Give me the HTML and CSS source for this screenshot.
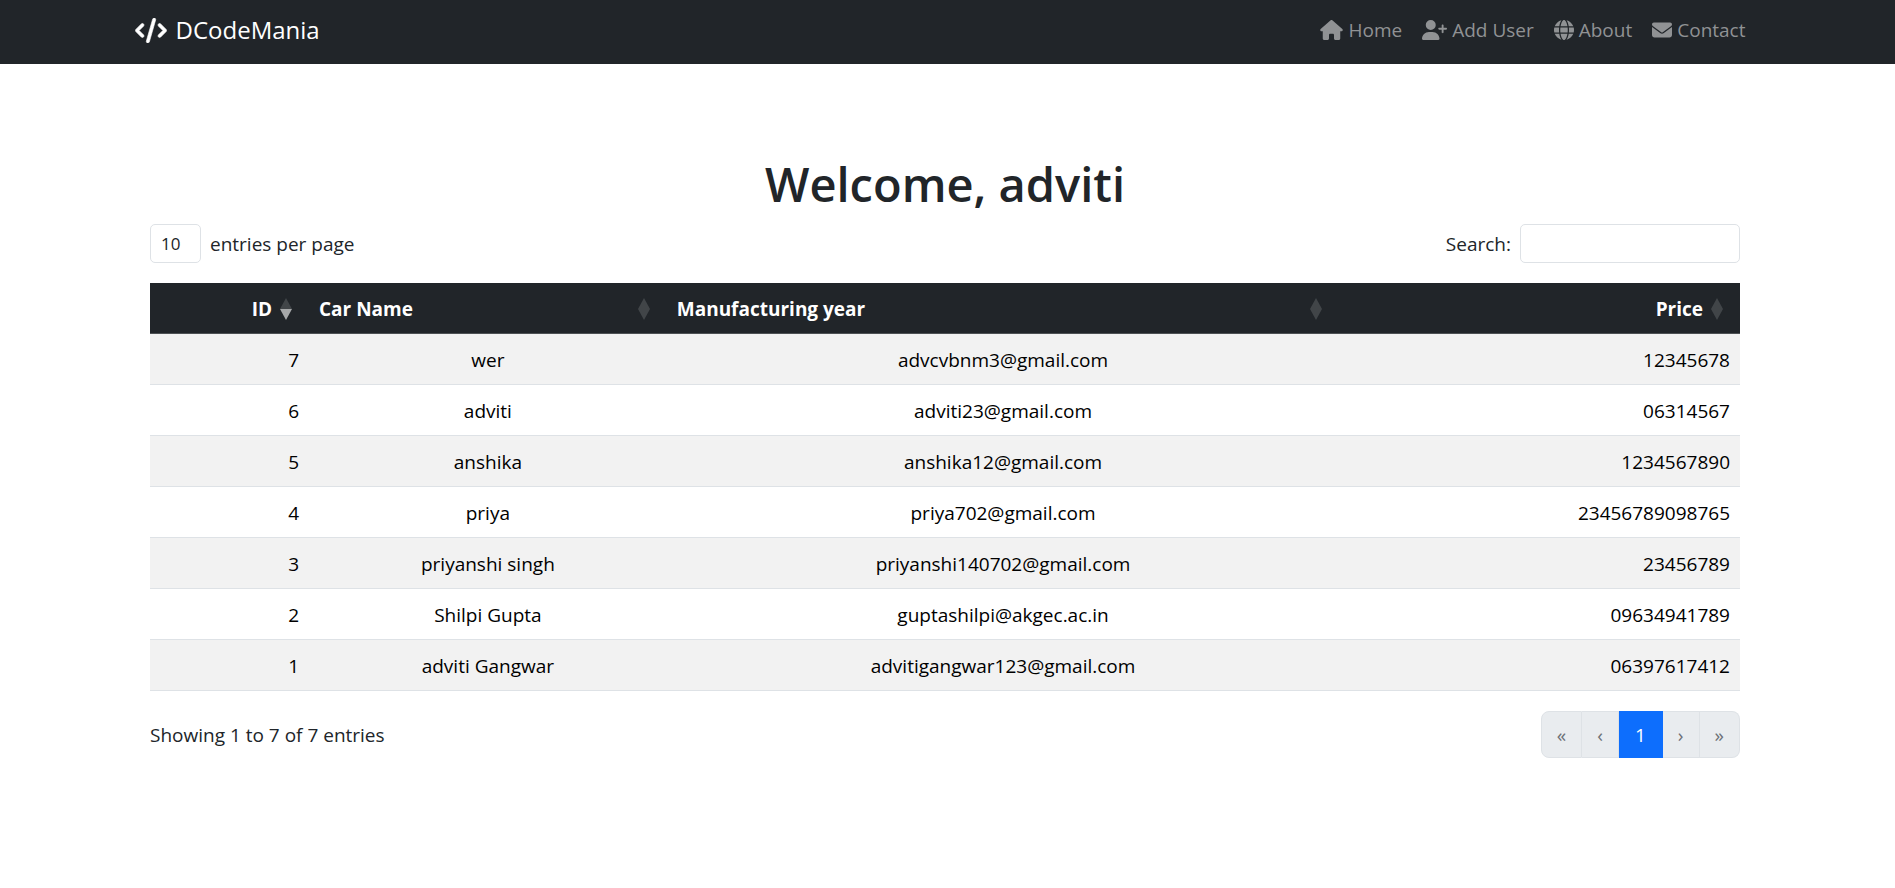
FILE: index.html
```html
<!DOCTYPE html>
<html lang="en">
<head>
<meta charset="utf-8">
<meta name="viewport" content="width=device-width, initial-scale=1">
<title>DCodeMania</title>
<link rel="stylesheet" href="styles.css">
</head>
<body>
<header class="navbar">
  <div class="container navbar-inner">
    <a class="brand" href="#">
      <svg class="icon brand-icon" viewBox="0 0 640 512" aria-hidden="true"><path d="M392.800 1.200c-17-4.900-34.700 5-39.600 22l-128 448c-4.900 17 5 34.700 22 39.600s34.700-5 39.600-22l128-448c4.900-17-5-34.700-22-39.600zm80.600 120.100c-12.500 12.500-12.500 32.800 0 45.300L562.700 256l-89.400 89.400c-12.500 12.500-12.500 32.800 0 45.300s32.800 12.500 45.300 0l112-112c12.500-12.500 12.500-32.800 0-45.300l-112-112c-12.500-12.500-32.800-12.500-45.300 0zm-306.700 0c-12.500-12.500-32.800-12.500-45.300 0l-112 112c-12.500 12.500-12.500 32.800 0 45.300l112 112c12.500 12.500 32.800 12.500 45.300 0s12.500-32.800 0-45.300L77.300 256l89.400-89.400c12.500-12.500 12.500-32.800 0-45.300z"/></svg>
      <span>DCodeMania</span>
    </a>
    <nav class="nav">
      <a class="nav-link" href="#"><svg class="icon icon-wide" viewBox="0 0 576 512" aria-hidden="true"><path d="M575.800 255.500c0 18-15 32.100-32 32.100h-32l.7 160.200c0 2.700-.2 5.400-.5 8.100V472c0 22.100-17.900 40-40 40H456c-1.100 0-2.200 0-3.300-.1c-1.400 .1-2.800 .1-4.200 .1H416 392c-22.100 0-40-17.900-40-40V448 384c0-17.700-14.300-32-32-32H256c-17.700 0-32 14.300-32 32v64 24c0 22.100-17.900 40-40 40H160 128.100c-1.500 0-3-.1-4.500-.2c-1.200 .1-2.400 .2-3.600 .2H104c-22.100 0-40-17.900-40-40V360c0-.9 0-1.900 .1-2.800V287.600H32c-18 0-32-14-32-32.100c0-9 3-17 10-24L266.400 8c7-7 15-8 22-8s15 2 21 7L564.800 231.500c8 7 12 15 11 24z"/></svg><span>Home</span></a>
      <a class="nav-link" href="#"><svg class="icon icon-widest" viewBox="0 0 640 512" aria-hidden="true"><path d="M96 128a128 128 0 1 1 256 0A128 128 0 1 1 96 128zM0 482.300C0 383.800 79.800 304 178.300 304h91.400C368.200 304 448 383.800 448 482.300c0 16.400-13.300 29.700-29.700 29.700H29.700C13.300 512 0 498.700 0 482.300zM504 312V248H440c-13.300 0-24-10.700-24-24s10.700-24 24-24h64V136c0-13.300 10.700-24 24-24s24 10.700 24 24v64h64c13.300 0 24 10.700 24 24s-10.700 24-24 24H552v64c0 13.300-10.700 24-24 24s-24-10.700-24-24z"/></svg><span>Add User</span></a>
      <a class="nav-link" href="#"><svg class="icon" viewBox="0 0 512 512" aria-hidden="true"><path d="M352 256c0 22.200-1.200 43.600-3.300 64H163.300c-2.200-20.400-3.300-41.800-3.300-64s1.200-43.600 3.300-64H348.700c2.200 20.400 3.300 41.800 3.300 64zm28.800-64H503.900c5.300 20.500 8.100 41.900 8.100 64s-2.800 43.500-8.100 64H380.800c2.100-20.600 3.200-42 3.200-64s-1.100-43.400-3.200-64zm112.600-32H376.700c-10-63.900-29.800-117.400-55.300-151.600c78.300 20.700 142 77.500 171.900 151.600zm-149.100 0H167.700c6.100-36.400 15.500-68.600 27-94.700c10.500-23.600 22.200-40.700 33.500-51.500C239.400 3.200 248.700 0 256 0s16.600 3.200 27.800 13.800c11.300 10.800 23 27.900 33.500 51.500c11.600 26 20.900 58.200 27 94.700zm-209 0H18.600C48.600 85.900 112.200 29.100 190.600 8.400C165.100 42.600 145.300 96.100 135.300 160zM8.100 192H131.200c-2.100 20.600-3.200 42-3.200 64s1.100 43.400 3.200 64H8.100C2.800 299.500 0 278.100 0 256s2.800-43.500 8.100-64zM194.700 446.600c-11.600-26-20.900-58.200-27-94.600H344.300c-6.100 36.400-15.500 68.600-27 94.600c-10.500 23.600-22.200 40.700-33.500 51.500C272.600 508.800 263.300 512 256 512s-16.600-3.200-27.800-13.800c-11.300-10.800-23-27.900-33.500-51.500zM135.300 352c10 63.900 29.800 117.400 55.300 151.600C112.200 482.900 48.600 426.100 18.600 352H135.300zm358.100 0c-30 74.100-93.600 130.900-171.900 151.600c25.500-34.200 45.200-87.700 55.300-151.600H493.400z"/></svg><span>About</span></a>
      <a class="nav-link" href="#"><svg class="icon" viewBox="0 0 512 512" aria-hidden="true"><path d="M48 64C21.500 64 0 85.500 0 112c0 15.100 7.100 29.300 19.200 38.400L236.800 313.600c11.400 8.500 27 8.500 38.400 0L492.800 150.400c12.100-9.100 19.200-23.300 19.200-38.400c0-26.500-21.500-48-48-48H48zM0 176V384c0 35.300 28.700 64 64 64H448c35.300 0 64-28.700 64-64V176L294.400 339.200c-22.800 17.100-54 17.100-76.800 0L0 176z"/></svg><span>Contact</span></a>
    </nav>
  </div>
</header>

<main class="container content">
  <h1 class="title">Welcome, adviti</h1>

  <div class="toolbar">
    <div class="field">
      <select class="control length" id="length"><option>10</option><option>25</option><option>50</option><option>100</option></select>
      <label for="length">entries per page</label>
    </div>
    <div class="field">
      <label for="search">Search:</label>
      <input class="control search" id="search" type="search">
    </div>
  </div>

  <table class="table">
    <colgroup><col class="col-id"><col class="col-name"><col class="col-year"><col class="col-price"></colgroup>
    <thead>
      <tr>
        <th scope="col" aria-sort="descending"><div class="head head-end"><span>ID</span><svg class="sort sort-desc" viewBox="0 0 14 22" aria-hidden="true"><path class="up" d="M7 0L13 11H1z"/><path class="down" d="M1 11H13L7 22z"/></svg></div></th>
        <th scope="col"><div class="head"><span>Car Name</span><svg class="sort" viewBox="0 0 14 22" aria-hidden="true"><path d="M7 0L13 11L7 22L1 11z"/></svg></div></th>
        <th scope="col"><div class="head"><span>Manufacturing year</span><svg class="sort" viewBox="0 0 14 22" aria-hidden="true"><path d="M7 0L13 11L7 22L1 11z"/></svg></div></th>
        <th scope="col"><div class="head head-end"><span>Price</span><svg class="sort" viewBox="0 0 14 22" aria-hidden="true"><path d="M7 0L13 11L7 22L1 11z"/></svg></div></th>
      </tr>
    </thead>
    <tbody>
      <tr><td class="num">7</td><td>wer</td><td>advcvbnm3@gmail.com</td><td class="num">12345678</td></tr>
      <tr><td class="num">6</td><td>adviti</td><td>adviti23@gmail.com</td><td class="num">06314567</td></tr>
      <tr><td class="num">5</td><td>anshika</td><td>anshika12@gmail.com</td><td class="num">1234567890</td></tr>
      <tr><td class="num">4</td><td>priya</td><td>priya702@gmail.com</td><td class="num">23456789098765</td></tr>
      <tr><td class="num">3</td><td>priyanshi singh</td><td>priyanshi140702@gmail.com</td><td class="num">23456789</td></tr>
      <tr><td class="num">2</td><td>Shilpi Gupta</td><td>guptashilpi@akgec.ac.in</td><td class="num">09634941789</td></tr>
      <tr><td class="num">1</td><td>adviti Gangwar</td><td>advitigangwar123@gmail.com</td><td class="num">06397617412</td></tr>
    </tbody>
  </table>

  <div class="footer">
    <div>Showing 1 to 7 of 7 entries</div>
    <nav class="pagination" aria-label="Pages">
      <button class="page" type="button" disabled aria-label="First">«</button>
      <button class="page" type="button" disabled aria-label="Previous">‹</button>
      <button class="page active" type="button" aria-current="page">1</button>
      <button class="page" type="button" disabled aria-label="Next">›</button>
      <button class="page" type="button" disabled aria-label="Last">»</button>
    </nav>
  </div>
</main>
</body>
</html>
```
FILE: styles.css
```css
* {
  box-sizing: border-box;
}

body {
  margin: 0;
  background: #fff;
  color: #212529;
  font-family: "Segoe UI", "Open Sans", "Noto Sans", sans-serif;
  font-size: 19px;
  line-height: 30px;
}

.navbar {
  padding-right: 5px;
  background: #212529;
}

.container {
  max-width: 1651px;
  margin: 0 auto;
  padding: 0 15px;
}

.navbar-inner {
  display: flex;
  align-items: center;
  justify-content: space-between;
  min-height: 64px;
  padding-bottom: 4px;
}

.brand {
  display: flex;
  align-items: center;
  gap: 9px;
  color: #fff;
  font-size: 24px;
  text-decoration: none;
}

.icon {
  width: 20px;
  height: 20px;
  fill: currentColor;
}

.brand-icon {
  width: 32px;
  height: 25px;
  stroke: currentColor;
  stroke-width: 12px;
}

.icon-wide {
  width: 23px;
}

.icon-widest {
  width: 25px;
}

.nav {
  display: flex;
}

.nav-link {
  display: flex;
  align-items: center;
  gap: 5px;
  padding: 10px;
  color: #909294;
  text-decoration: none;
}

.content {
  padding: 90px 33px 0 28px;
}

.title {
  margin: 0 0 10px;
  font-size: 47px;
  font-weight: 600;
  line-height: 60px;
  text-align: center;
}

.toolbar,
.footer {
  display: flex;
  align-items: center;
  justify-content: space-between;
}

.field {
  display: flex;
  align-items: center;
  gap: 9px;
}

.control {
  height: 39px;
  padding: 0 10px;
  border: 1px solid #dee2e6;
  border-radius: 5px;
  background: #fff;
  color: #212529;
  font-family: inherit;
  font-size: 17px;
  appearance: none;
}

.length {
  width: 51px;
}

.search {
  width: 220px;
}

.table {
  width: 100%;
  margin: 20px 0;
  border-collapse: separate;
  border-spacing: 0;
  table-layout: fixed;
}

.col-id {
  width: 10%;
}

.col-name {
  width: 22.5%;
}

.col-year {
  width: 42.3%;
}

.table th,
.table td {
  padding: 11px 10px 9px;
  border-bottom: 1px solid #dee2e6;
  text-align: center;
}

.table th {
  border-color: #4d5154;
  background: #212529;
  color: #fff;
  font-weight: 700;
}

.table td {
  color: #000;
}

.table .num {
  text-align: right;
}

.table tbody tr:nth-child(odd) {
  background: #f2f2f2;
}

.head {
  display: flex;
  align-items: center;
  justify-content: space-between;
  padding-right: 6px;
}

.head-end {
  justify-content: flex-end;
  gap: 7px;
}

.sort {
  width: 14px;
  height: 22px;
  fill: #414548;
}

.sort-desc .down {
  fill: #a6a8a9;
}

.pagination {
  display: flex;
}

.page {
  height: 47px;
  padding: 0 15px;
  border: 1px solid #dee2e6;
  border-left-width: 0;
  background: #e9ecef;
  color: #6c7177;
  font-family: inherit;
  font-size: 19px;
  line-height: 30px;
}

.page:first-child {
  border-left-width: 1px;
  border-radius: 8px 0 0 8px;
}

.page:last-child {
  border-radius: 0 8px 8px 0;
}

.page.active {
  padding: 0 16px;
  border-color: #0d6efd;
  background: #0d6efd;
  color: #fff;
}
```
